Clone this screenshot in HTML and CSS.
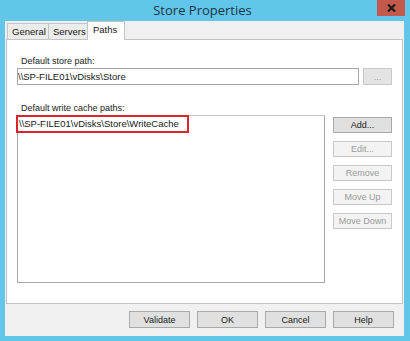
FILE: index.html
```html
<!DOCTYPE html>
<html lang="en">
<head>
    <meta charset="UTF-8">
    <title>Store Properties</title>
    <link rel="stylesheet" href="styles.css">
</head>
<body>
    <div class="window">
        <!-- Barra de título -->
        <div class="titlebar">
            <span></span>
            <span class="title">Store Properties</span>
            <button class="close" type="button">
                <svg width="9" height="8" viewBox="0 0 9 8">
                    <path d="M1 0.5 L8 7.5 M8 0.5 L1 7.5" stroke="#1c1c1c" stroke-width="2.2" fill="none"/>
                </svg>
            </button>
        </div>

        <div class="client">
            <!-- Pestañas -->
            <div class="tabs">
                <div class="tab">General</div>
                <div class="tab">Servers</div>
                <div class="tab active">Paths</div>
            </div>

            <div class="panel">
                <div class="label">Default store path:</div>
                <div class="row">
                    <div class="textbox">\\SP-FILE01\vDisks\Store</div>
                    <button class="btn disabled browse" type="button">...</button>
                </div>

                <div class="label second">Default write cache paths:</div>
                <div class="listarea">
                    <div class="listbox">
                        <div class="item">\\SP-FILE01\vDisks\Store\WriteCache</div>
                    </div>
                    <div class="side">
                        <button class="btn" type="button">Add...</button>
                        <button class="btn disabled" type="button">Edit...</button>
                        <button class="btn disabled" type="button">Remove</button>
                        <button class="btn disabled" type="button">Move Up</button>
                        <button class="btn disabled" type="button">Move Down</button>
                    </div>
                </div>
            </div>

            <!-- Botones inferiores -->
            <div class="footer">
                <button class="btn" type="button">Validate</button>
                <button class="btn" type="button">OK</button>
                <button class="btn" type="button">Cancel</button>
                <button class="btn" type="button">Help</button>
            </div>
        </div>
    </div>
</body>
</html>
```

FILE: styles.css
```css
* {
    box-sizing: border-box;
}

body {
    margin: 0;
    padding: 0;
    font-family: "Liberation Sans", Arial, sans-serif;
    font-size: 9px;
    color: #1a1a1a;
}

.window {
    width: 410px;
    height: 341px;
    background-color: #62c6ea;
    display: flex;
    flex-direction: column;
}

.titlebar {
    height: 21px;
    display: grid;
    grid-template-columns: 1fr auto 1fr;
    align-items: start;
    padding-right: 5px;
}

.title {
    font-family: "Open Sans", "Noto Sans", sans-serif;
    font-size: 13px;
    line-height: 20px;
    color: #1d3447;
}

.close {
    justify-self: end;
    width: 28px;
    height: 16px;
    margin: 0;
    padding: 0;
    border: none;
    background-color: #c4584a;
    display: flex;
    align-items: center;
    justify-content: center;
}

.client {
    flex: 1;
    margin: 0 6px 5px 5px;
    background-color: #f0f0f0;
    display: flex;
    flex-direction: column;
}

.tabs {
    height: 18px;
    display: flex;
    align-items: flex-end;
    padding-left: 2px;
    position: relative;
    z-index: 1;
}

.tab {
    height: 16px;
    padding: 0 4px;
    border: 1px solid #c4c4c4;
    border-bottom: none;
    background-color: #ececec;
    line-height: 15px;
    font-size: 9.5px;
    margin-right: -1px;
}

.tab:nth-child(1) { width: 42px; }
.tab:nth-child(2) { width: 40px; }

.tab.active {
    width: 38px;
    height: 19px;
    margin-bottom: -1px;
    background-color: #fff;
    line-height: 15px;
    padding-left: 5px;
}

.panel {
    height: 265px;
    margin: 0 1px;
    background-color: #fff;
    border: 1px solid #c4c4c4;
    padding: 15px 10px 0 10px;
}

.label {
    height: 12px;
    line-height: 12px;
    padding-left: 4px;
    margin-bottom: 1px;
}

.label.second {
    margin-top: 17px;
}

.row {
    display: flex;
    gap: 4px;
}

.textbox {
    width: 344px;
    height: 17px;
    border: 1px solid #a7a7a7;
    line-height: 15px;
    font-size: 9.5px;
    padding-left: 0;
}

.btn {
    height: 17px;
    margin: 0;
    padding: 0;
    font-family: "Liberation Sans", Arial, sans-serif;
    font-size: 9px;
    color: #1a1a1a;
    background-color: #e0e0e0;
    border: 1px solid #a9a9a9;
}

.btn.disabled {
    color: #9a9a9a;
    background-color: #f3f3f3;
    border-color: #c9c9c9;
}

.btn.browse {
    width: 29px;
    background-color: #e4e4e4;
}

.listarea {
    display: flex;
    gap: 8px;
}

.listbox {
    width: 309px;
    height: 168px;
    border: 1px solid #a7a7a7;
    border-top-color: #c4c4c4;
}

.item {
    display: inline-block;
    margin: -1px 0 0 -2px;
    padding: 0 8px 0 1px;
    height: 18px;
    line-height: 14px;
    font-size: 9.5px;
    border: 2px solid #d9262e;
}

.side {
    width: 59px;
    padding-top: 2px;
    display: flex;
    flex-direction: column;
    gap: 8px;
}

.side .btn {
    height: 16px;
}

.footer {
    flex: 1;
    display: flex;
    justify-content: flex-end;
    gap: 7px;
    padding: 7px 10px 0 0;
}

.footer .btn {
    width: 61px;
}
```
